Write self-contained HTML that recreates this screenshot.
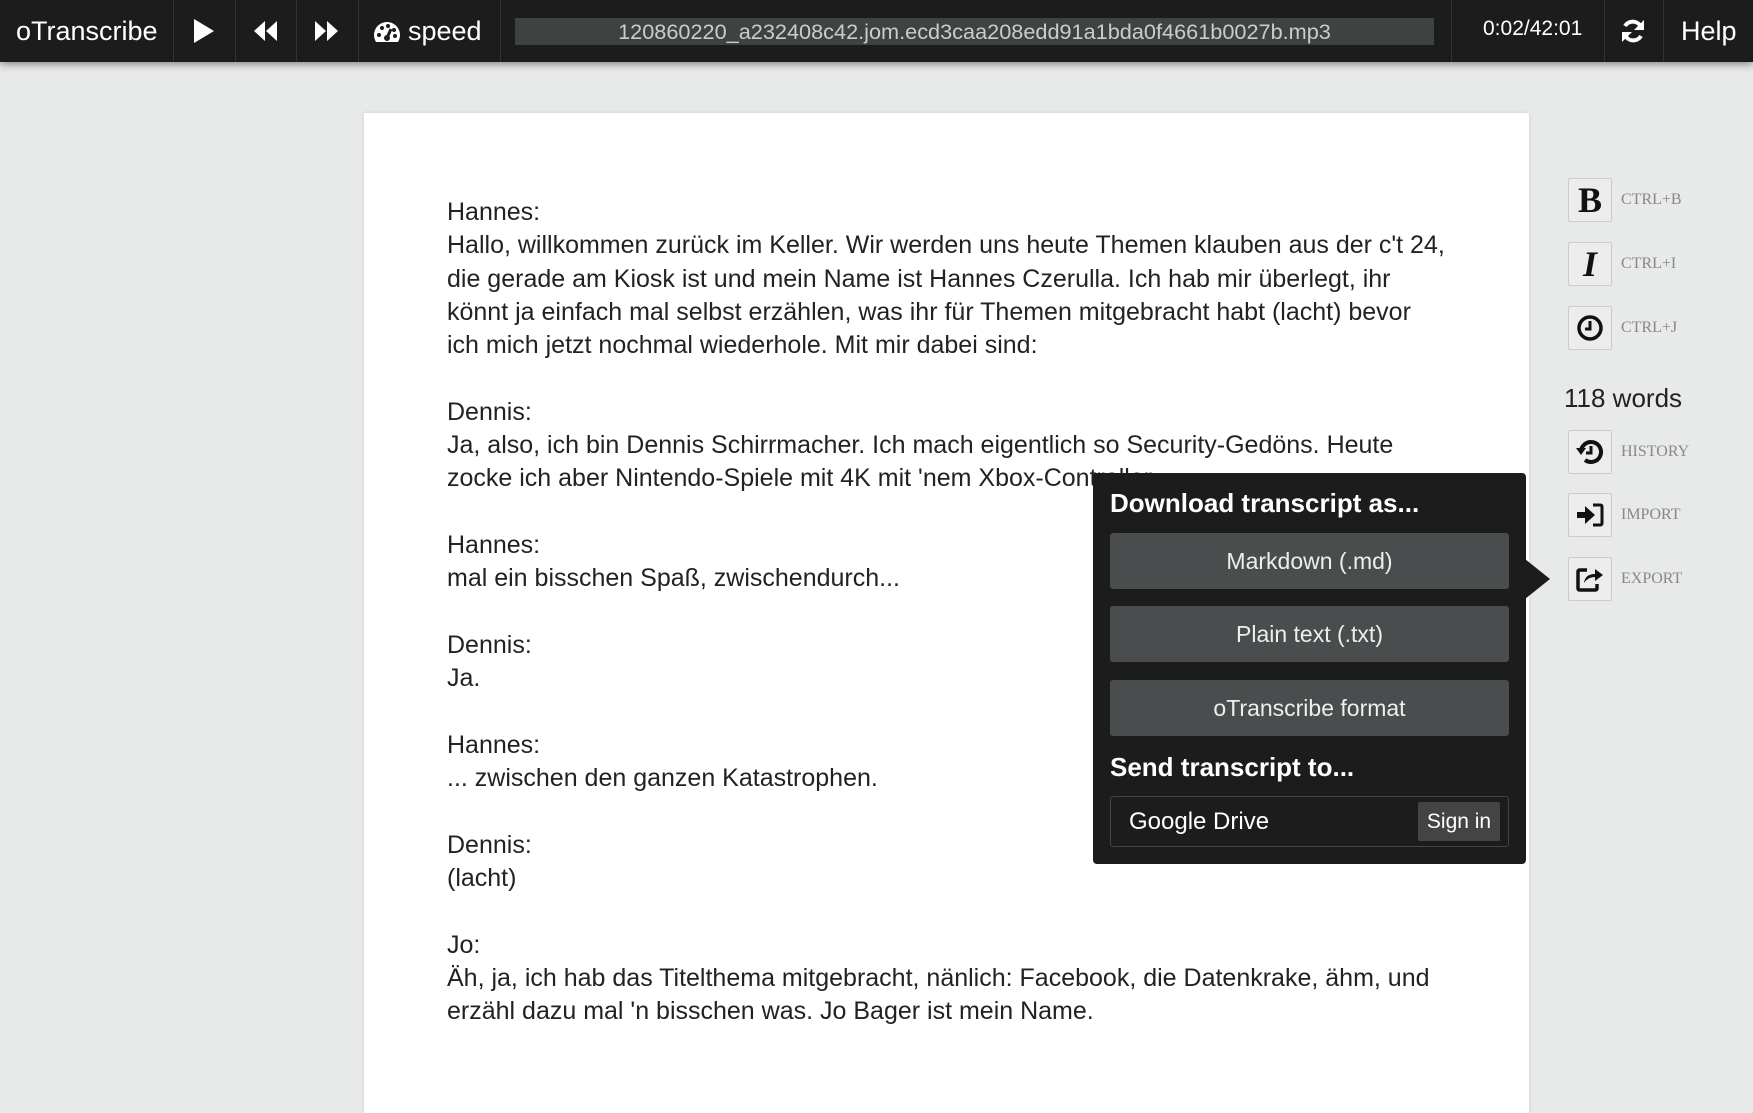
<!DOCTYPE html>
<html><head><meta charset="utf-8">
<style>
*{margin:0;padding:0;box-sizing:border-box}
body{width:1753px;height:1080px;overflow:hidden;background:#e8e9e9;font-family:"Liberation Sans",Arial,sans-serif;position:relative}
.bar{position:absolute;left:0;top:0;width:1753px;height:62px;background:#1c1c1c;box-shadow:0 2px 8px rgba(0,0,0,.45);z-index:5;color:#fff}
.bar .d{position:absolute;top:0;height:62px;width:1px;background:#333}
.bar .t{position:absolute;top:0;line-height:62px;white-space:nowrap}
.fn{position:absolute;left:515px;top:18px;width:919px;height:27px;background:#3f4242;color:#ccc;font-size:21.7px;line-height:27px;text-align:center;white-space:nowrap}
.paper{position:absolute;left:364px;top:113px;width:1165px;height:1000px;background:#fff;box-shadow:0 0 4px rgba(0,0,0,.12)}
.txt{position:absolute;left:447px;top:196px;font-size:25px;line-height:33.3px;color:#222;white-space:nowrap}
.btn{position:absolute;left:1568px;width:44px;height:44px;border:1px solid #ccc;border-radius:2px;background:#ececec;display:flex;align-items:center;justify-content:center}
.lbl{position:absolute;left:1621px;font-family:"Liberation Serif",serif;font-size:16px;color:#888;line-height:20px}
.pop{position:absolute;left:1093px;top:473px;width:433px;height:391px;background:#1c1c1c;border-radius:4px;color:#fff}
.pop h3{position:absolute;left:17px;font-size:26px;font-weight:bold;line-height:30px}
.pb{position:absolute;left:17px;width:399px;height:56px;background:#4a4d4d;border-radius:3px;color:#eee;font-size:23px;line-height:56px;text-align:center}
</style></head><body>
<div class="bar">
<div class="t" style="left:16px;font-size:27px">oTranscribe</div>
<div class="d" style="left:173px"></div>
<svg style="position:absolute;left:193px;top:19px" width="22" height="24" viewBox="0 0 22 24"><path d="M1 0L21 12L1 24Z" fill="#fff"/></svg>
<div class="d" style="left:235px"></div>
<svg style="position:absolute;left:253px;top:21px" width="26" height="20" viewBox="0 0 26 20"><path d="M12 0L1 10L12 20ZM24 0L13 10L24 20Z" fill="#fff"/></svg>
<div class="d" style="left:296px"></div>
<svg style="position:absolute;left:313px;top:21px" width="26" height="20" viewBox="0 0 26 20"><path d="M2 0L13 10L2 20ZM14 0L25 10L14 20Z" fill="#fff"/></svg>
<div class="d" style="left:358px"></div>
<svg style="position:absolute;left:373px;top:21px" width="28" height="22" viewBox="0 0 28 22"><path d="M14 1A13 13 0 0 0 1 14C1 17 2 19 3 21H25C26 19 27 17 27 14A13 13 0 0 0 14 1Z" fill="#fff"/><circle cx="6" cy="14" r="2" fill="#1c1c1c"/><circle cx="9" cy="7" r="2" fill="#1c1c1c"/><circle cx="15" cy="5" r="2" fill="#1c1c1c"/><circle cx="21" cy="9" r="2" fill="#1c1c1c"/><circle cx="22" cy="15" r="2" fill="#1c1c1c"/><path d="M14 17L18 8" stroke="#1c1c1c" stroke-width="3"/><circle cx="14" cy="17" r="3" fill="#1c1c1c"/></svg>
<div class="t" style="left:408px;font-size:27px">speed</div>
<div class="d" style="left:500px"></div>
<div class="fn">120860220_a232408c42.jom.ecd3caa208edd91a1bda0f4661b0027b.mp3</div>
<div class="d" style="left:1451px"></div>
<div class="t" style="left:1483px;font-size:21px;top:-2px">0:02/42:01</div>
<div class="d" style="left:1604px"></div>
<svg style="position:absolute;left:1620px;top:18px" width="26" height="26" viewBox="0 0 26 26"><path d="M21 9A9 9 0 0 0 5 8" stroke="#fff" stroke-width="4" fill="none"/><path d="M24 2V12H14Z" fill="#fff"/><path d="M5 17A9 9 0 0 0 21 18" stroke="#fff" stroke-width="4" fill="none"/><path d="M2 24V14H12Z" fill="#fff"/></svg>
<div class="d" style="left:1663px"></div>
<div class="t" style="left:1681px;font-size:27px">Help</div>
</div>
<div class="paper"></div>
<div class="txt">Hannes:<br>Hallo, willkommen zurück im Keller. Wir werden uns heute Themen klauben aus der c't 24,<br>die gerade am Kiosk ist und mein Name ist Hannes Czerulla. Ich hab mir überlegt, ihr<br>könnt ja einfach mal selbst erzählen, was ihr für Themen mitgebracht habt (lacht) bevor<br>ich mich jetzt nochmal wiederhole. Mit mir dabei sind:<br><br>Dennis:<br>Ja, also, ich bin Dennis Schirrmacher. Ich mach eigentlich so Security-Gedöns. Heute<br>zocke ich aber Nintendo-Spiele mit 4K mit 'nem Xbox-Controller.<br><br>Hannes:<br>mal ein bisschen Spaß, zwischendurch...<br><br>Dennis:<br>Ja.<br><br>Hannes:<br>... zwischen den ganzen Katastrophen.<br><br>Dennis:<br>(lacht)<br><br>Jo:<br>Äh, ja, ich hab das Titelthema mitgebracht, nänlich: Facebook, die Datenkrake, ähm, und<br>erzähl dazu mal 'n bisschen was. Jo Bager ist mein Name.</div>

<div class="btn" style="top:178px"><span style="font-family:'Liberation Serif',serif;font-weight:bold;font-size:36px;color:#111">B</span></div>
<div class="lbl" style="top:190px">CTRL+B</div>
<div class="btn" style="top:242px"><span style="font-family:'Liberation Serif',serif;font-weight:bold;font-style:italic;font-size:36px;color:#111">I</span></div>
<div class="lbl" style="top:254px">CTRL+I</div>
<div class="btn" style="top:306px"><svg width="28" height="28" viewBox="0 0 28 28"><circle cx="14" cy="14" r="11" stroke="#111" stroke-width="3.5" fill="none"/><path d="M14 7V15H9" stroke="#111" stroke-width="3" fill="none"/></svg></div>
<div class="lbl" style="top:318px">CTRL+J</div>
<div style="position:absolute;left:1564px;top:382px;font-size:26px;color:#222;line-height:32px">118 words</div>
<div class="btn" style="top:430px"><svg width="30" height="28" viewBox="0 0 30 28"><path d="M6 14A10 10 0 1 1 10 22" stroke="#111" stroke-width="4" fill="none"/><path d="M1 10H11L6 17Z" fill="#111"/><path d="M16 8V15H11" stroke="#111" stroke-width="3" fill="none"/></svg></div>
<div class="lbl" style="top:442px">HISTORY</div>
<div class="btn" style="top:493px"><svg width="30" height="26" viewBox="0 0 30 26"><path d="M2 10H10V4L20 13L10 22V16H2Z" fill="#111"/><path d="M18 3H25Q27 3 27 5V21Q27 23 25 23H18" stroke="#111" stroke-width="3" fill="none"/></svg></div>
<div class="lbl" style="top:505px">IMPORT</div>
<div class="btn" style="top:557px"><svg width="30" height="28" viewBox="0 0 30 28"><path d="M12 5H5Q3 5 3 7V23Q3 25 5 25H20Q22 25 22 23V19" stroke="#111" stroke-width="3.5" fill="none"/><path d="M9 18Q10 9 20 9V4L28 10L20 16V12Q13 12 9 18Z" fill="#111"/></svg></div>
<div class="lbl" style="top:569px">EXPORT</div>

<div class="pop">
<svg style="position:absolute;left:432px;top:86px" width="26" height="40" viewBox="0 0 26 40"><path d="M0 0L25 20L0 40Z" fill="#1c1c1c"/></svg>
<h3 style="top:15px">Download transcript as...</h3>
<div class="pb" style="top:60px">Markdown (.md)</div>
<div class="pb" style="top:133px">Plain text (.txt)</div>
<div class="pb" style="top:207px">oTranscribe format</div>
<h3 style="top:279px">Send transcript to...</h3>
<div style="position:absolute;left:17px;top:323px;width:399px;height:51px;border:1px solid #444;border-radius:3px">
<div style="position:absolute;left:18px;top:0;line-height:49px;font-size:24px;color:#fff">Google Drive</div>
<div style="position:absolute;left:307px;top:5px;width:82px;height:39px;background:#444;border-radius:2px;font-size:21px;line-height:39px;text-align:center;color:#fff">Sign in</div>
</div>
</div>
</body></html>
